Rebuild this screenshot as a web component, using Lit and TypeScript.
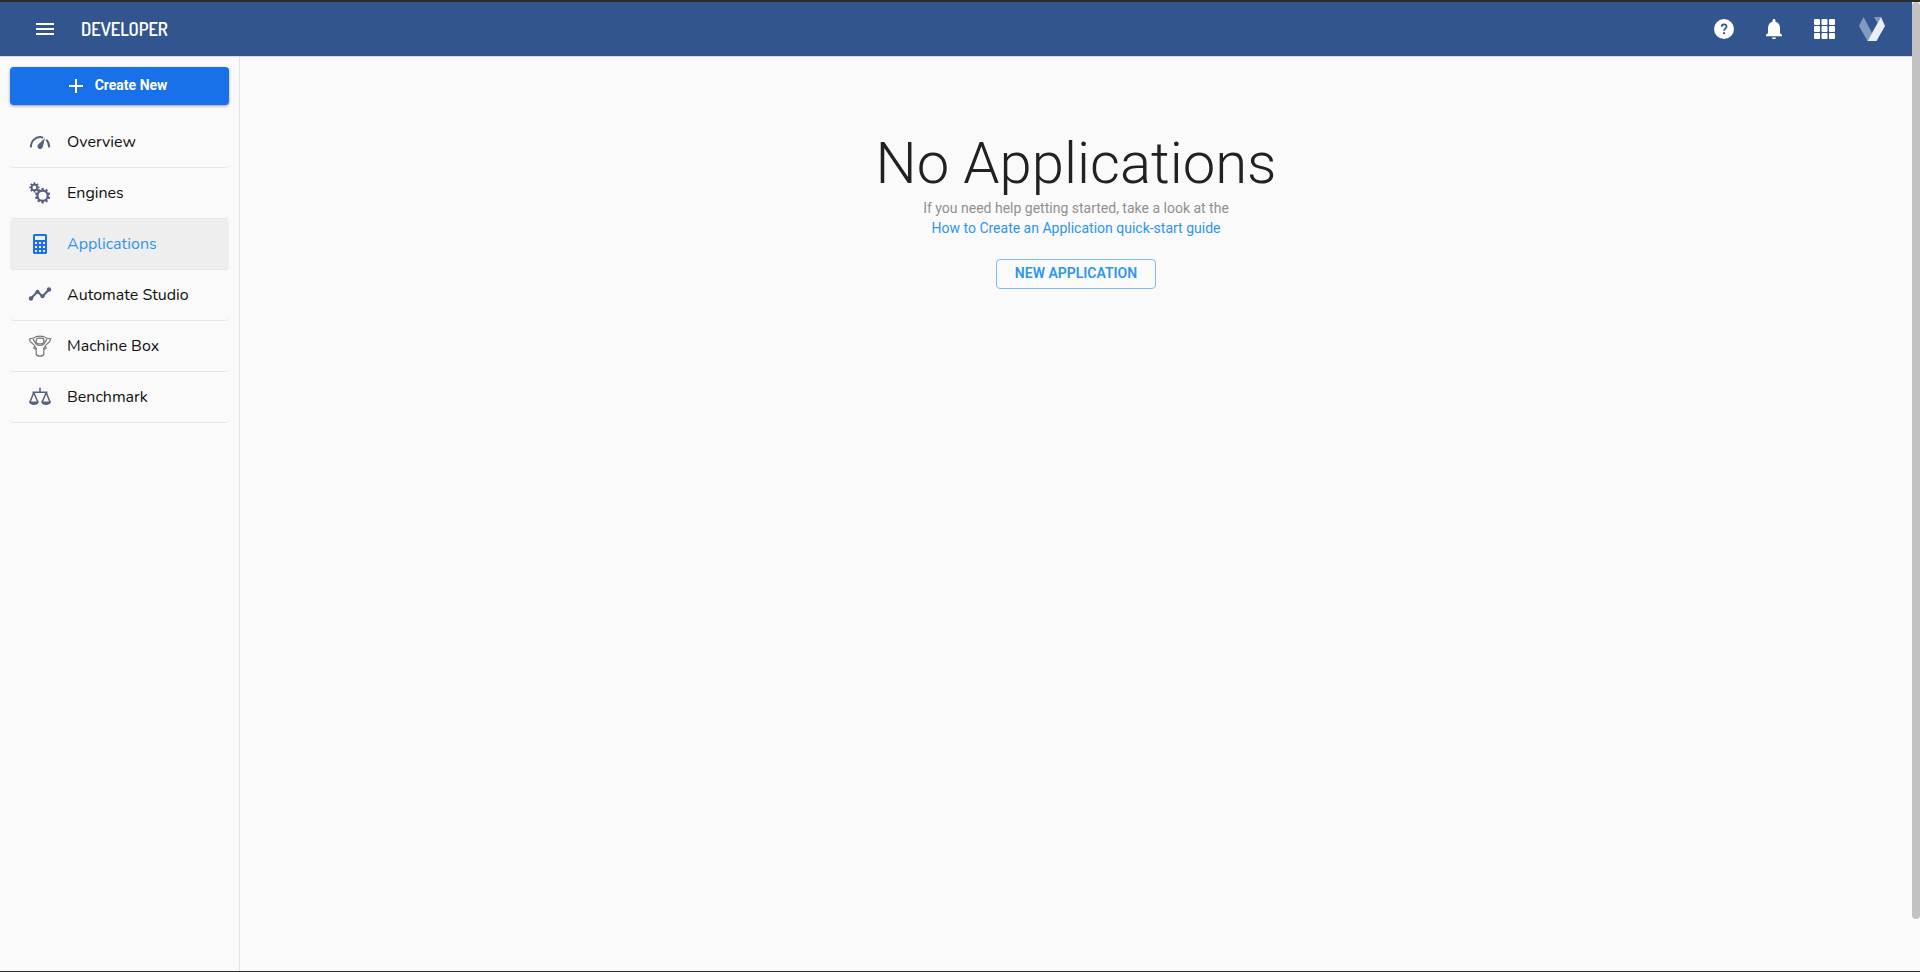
import { LitElement, html, css, svg } from "lit";
import { customElement, state } from "lit/decorators.js";
import { classMap } from "lit/directives/class-map.js";

const gear = (cx: number, cy: number, r: number, hole: number, teeth: number, tooth: number) => {
  const marks = Array.from({ length: teeth }, (_, i) => i * (360 / teeth));
  return svg`
    <circle cx=${cx} cy=${cy} r=${(r + hole) / 2} fill="none" stroke="currentColor" stroke-width=${r - hole}></circle>
    ${marks.map((a) => svg`<rect x=${cx - tooth / 2} y=${cy - r - 1.5} width=${tooth} height="2.4" fill="currentColor" transform=${`rotate(${a} ${cx} ${cy})`}></rect>`)}`;
};

const icons: Record<string, unknown> = {
  overview: svg`
    <path d="M2.800 17.500C2.800 10 9 5.500 15.200 7.600M18.300 9.800Q21.200 12.500 21.200 17.500" fill="none" stroke="currentColor" stroke-width="1.900"></path>
    <path d="M17 8 14.800 16.800A2.700 2.700 0 1 1 10.200 14.400Z" fill="currentColor"></path>`,
  engines: svg`${gear(6.4, 6.4, 3.6, 1.9, 8, 1.8)}${gear(14.6, 14.7, 6.2, 4, 10, 2.3)}`,
  applications: svg`
    <path fill="currentColor" fill-rule="evenodd" d="M6.500 2h11A1.500 1.500 0 0 1 19 3.500v17a1.500 1.500 0 0 1-1.500 1.500h-11A1.500 1.500 0 0 1 5 20.500v-17A1.500 1.500 0 0 1 6.500 2ZM7 4v4h10V4ZM7 10v2h2v-2Zm4 0v2h2v-2Zm4 0v2h2v-2ZM7 14v2h2v-2Zm4 0v2h2v-2Zm4 0v2h2v-2ZM7 18v2h2v-2Zm4 0v2h2v-2Zm4 0v2h2v-2Z"></path>`,
  automate: svg`
    <path d="M3 15.500 9.500 8.500 14.500 13.500 21 6.500" fill="none" stroke="currentColor" stroke-width="2.200"></path>
    <g fill="currentColor"><circle cx="3" cy="15.500" r="2.200"></circle><circle cx="9.500" cy="8.700" r="2"></circle><circle cx="14.500" cy="13.300" r="2"></circle><circle cx="21" cy="6.500" r="2.200"></circle></g>`,
  machine: svg`
    <g fill="none" stroke="currentColor" stroke-width="1.200">
      <path d="M1.300 4.800C4 4.600 6 4 8.200 2.700Q12 1.600 15.800 2.700C18 4 20 4.600 22.700 4.800L21.800 7.500 17.300 11.600M6.700 11.600 2.200 7.500 1.300 4.800"></path>
      <path d="M5 5.200 8.300 10.200Q12 12.600 15.700 10.200L19 5.200"></path>
      <rect x="8" y="4.200" width="8" height="5.600" rx="2.800"></rect>
      <path d="M6.700 11.600 5.800 14 8.200 15.800V20Q8.700 22.200 12 22.200T15.800 20V15.800L18.200 14 17.300 11.600M7 12.500 8.800 15M17 12.500 15.200 15"></path>
    </g>`,
  benchmark: svg`
    <path d="M12 2.500V7M4.500 7.200H19.500M5.800 7.500 2 17M5.800 7.500 9.800 17M18.200 7.500 14.200 17M18.200 7.500 22 17" fill="none" stroke="currentColor" stroke-width="1.500"></path>
    <path d="M.800 16.500H11C10.500 21 1.300 21 .800 16.500ZM13 16.500H23.200C22.700 21 13.500 21 13 16.500Z" fill="currentColor"></path>`,
};

const items = [
  { id: "overview", label: "Overview" },
  { id: "engines", label: "Engines" },
  { id: "applications", label: "Applications" },
  { id: "automate", label: "Automate Studio" },
  { id: "machine", label: "Machine Box" },
  { id: "benchmark", label: "Benchmark" },
];

@customElement("app-header")
class AppHeader extends LitElement {
  static styles = css`
    :host { display: block; }
    .bar { display: flex; align-items: center; justify-content: space-between; height: 55px; padding: 0 17px 0 32px; background: #32558f; border-bottom: 1px solid #d5dcea; box-sizing: border-box; }
    .side { display: flex; align-items: center; gap: 23px; }
    .tools { display: flex; align-items: center; }
    button { display: grid; place-items: center; padding: 0; border: 0; background: none; color: #fff; cursor: pointer; }
    .tool { width: 50px; }
    .account { width: 46px; }
    svg { display: block; }
    .name { font: 600 18px/24px Dosis, "Liberation Sans Narrow", "Roboto Condensed", sans-serif; color: #fff; }
  `;
  render() {
    return html`<header class="bar">
      <div class="side">
        <button aria-label="Menu"><svg width="26" height="24" viewBox="0 0 26 24" fill="currentColor"><path d="M4 6h18v2H4zM4 11h18v2H4zM4 16h18v2H4z"></path></svg></button>
        <span class="name">DEVELOPER</span>
      </div>
      <div class="tools">
        <button class="tool" aria-label="Help"><svg width="24" height="24" viewBox="0 0 24 24"><circle cx="12" cy="12" r="10" fill="currentColor"></circle><path d="M9.600 9.800C9.600 6.500 14.600 6.600 14.600 9.500C14.600 11.300 12.100 11.500 12.100 13.800" fill="none" stroke="#32558f" stroke-width="1.700"></path><circle cx="12.100" cy="16.200" r="1.100" fill="#32558f"></circle></svg></button>
        <button class="tool" aria-label="Notifications"><svg width="24" height="24" viewBox="0 0 24 24" fill="currentColor"><path d="M12 22c1.100 0 2-.700 2-1.600h-4c0 .900.890 1.600 2 1.600zM18 16v-5c0-3.070-1.640-5.640-4.500-6.320V3.500c0-.830-.670-1.500-1.500-1.500s-1.500.670-1.500 1.500v1.180C7.630 5.360 6 7.920 6 11v5l-2 2v1.200h16V18z"></path></svg></button>
        <button class="tool" aria-label="Apps"><svg width="24" height="24" viewBox="0 0 24 24" fill="currentColor"><rect x="2" y="2" width="6" height="6" rx="1"></rect><rect x="9.500" y="2" width="6" height="6" rx="1"></rect><rect x="17" y="2" width="6" height="6" rx="1"></rect><rect x="2" y="9" width="6" height="6" rx="1"></rect><rect x="9.500" y="9" width="6" height="6" rx="1"></rect><rect x="17" y="9" width="6" height="6" rx="1"></rect><rect x="2" y="16" width="6" height="6" rx="1"></rect><rect x="9.500" y="16" width="6" height="6" rx="1"></rect><rect x="17" y="16" width="6" height="6" rx="1"></rect></svg></button>
        <button class="account" aria-label="Account"><svg width="28" height="26" viewBox="0 0 28 26"><path d="M5.500 1 1 10 9.500 25 14 17Z" fill="#8499bf"></path><path d="M16 1h7l-3.500 6Z" fill="#8499bf"></path><path d="M23 1 27 10 18.500 25H9.500Z" fill="#e9edf5"></path></svg></button>
      </div>
    </header>`;
  }
}

@customElement("app-sidebar")
class AppSidebar extends LitElement {
  @state() current = "applications";
  static styles = css`
    :host { display: block; padding: 10px; border-right: 1px solid #e4e4e4; box-sizing: border-box; }
    .create { display: flex; align-items: center; justify-content: center; gap: 9px; width: 100%; height: 38px; padding: 0 6px 2px 0; border: 0; border-radius: 4px; background: #1871e8; color: #fff; font: 700 14px/20px Roboto, sans-serif; box-shadow: 0 1px 3px rgba(0, 0, 0, 0.4); cursor: pointer; }
    .list { margin: 12px 0 0; padding: 0; list-style: none; }
    .item { display: flex; align-items: center; gap: 15px; height: 51px; padding: 0 18px; box-sizing: border-box; border-bottom: 1px solid #e6e6e6; border-radius: 4px; color: #111; font: 400 16px/24px Nunito, "Noto Sans", sans-serif; text-decoration: none; }
    .icon { color: #566080; }
    .item.machine .icon { color: #777; }
    .item.active { background: #eee; color: #2d93ee; }
    .item.active .icon { color: #1871e8; }
  `;
  render() {
    return html`
      <button class="create"><svg width="20" height="20" viewBox="0 0 20 20"><path d="M10 4v14M3 11h14" stroke="currentColor" stroke-width="2"></path></svg>Create New</button>
      <nav><ul class="list">${items.map((i) => html`<li><a href="#${i.id}" class=${classMap({ item: true, [i.id]: true, active: i.id === this.current })} @click=${() => (this.current = i.id)}><svg class="icon" width="24" height="24" viewBox="0 0 24 24">${icons[i.id]}</svg>${i.label}</a></li>`)}</ul></nav>`;
  }
}

@customElement("app-root")
class AppRoot extends LitElement {
  static styles = css`
    :host { display: flex; height: 100vh; box-sizing: border-box; border-top: 2px solid #2b2b2e; border-bottom: 1px solid #2b2b2e; background: #fafafa; font-family: Roboto, sans-serif; }
    .page { flex: 1; min-width: 0; display: flex; flex-direction: column; }
    .body { flex: 1; display: grid; grid-template-columns: 240px 1fr; }
    .empty { display: flex; flex-direction: column; align-items: center; padding-top: 71px; text-align: center; }
    .title { margin: 0; font-size: 58px; line-height: 70px; font-weight: 300; color: #212121; }
    .hint { margin: 0; font-size: 14px; line-height: 20px; color: #909090; }
    .guide { display: block; color: #2d96f0; text-decoration: none; }
    .new { margin-top: 21px; height: 30px; padding: 0 18px 2px; border: 1px solid #7fbef5; border-radius: 4px; background: none; color: #2d96f0; font: 600 14px/20px Roboto, sans-serif; cursor: pointer; }
    .track { width: 8px; }
    .thumb { height: 94.600%; border-radius: 4px; background: #c2c2c2; }
  `;
  render() {
    return html`
      <div class="page">
        <app-header></app-header>
        <div class="body">
          <app-sidebar></app-sidebar>
          <main class="empty">
            <h1 class="title">No Applications</h1>
            <p class="hint">If you need help getting started, take a look at the <a class="guide" href="#guide">How to Create an Application quick-start guide</a></p>
            <button class="new">NEW APPLICATION</button>
          </main>
        </div>
      </div>
      <div class="track"><div class="thumb"></div></div>`;
  }
}
